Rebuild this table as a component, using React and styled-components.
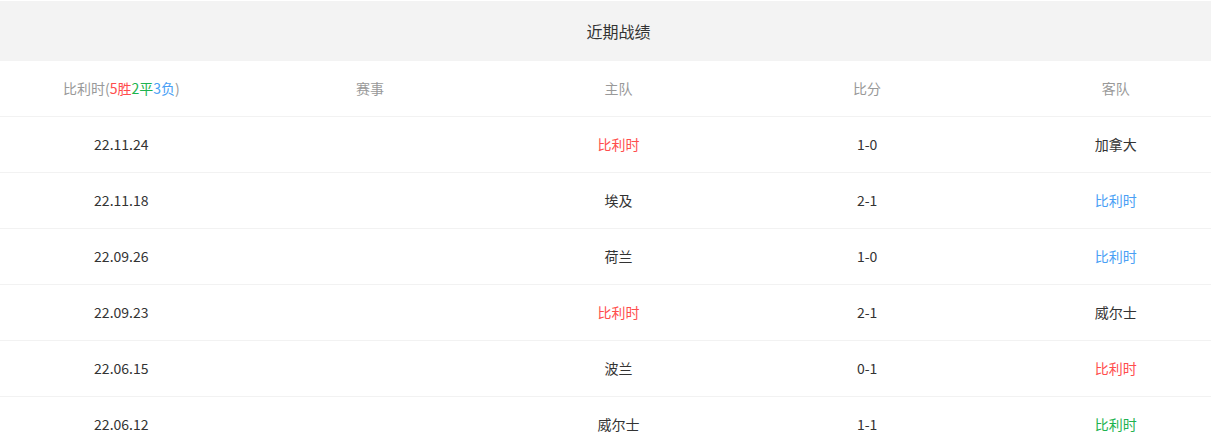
import styled, { createGlobalStyle } from "styled-components";

const GlobalStyle = createGlobalStyle`
  html, body {
    margin: 0;
    padding: 0;
    background: #fff;
    overflow: hidden;
  }
  body {
    font-family: "Noto Sans CJK SC", "Noto Sans", sans-serif;
  }
`;

const Panel = styled.div`
  width: 1243px;
  margin-left: -3px;
  padding-top: 1px;
  background: #fff;
`;

const PanelTitle = styled.div`
  height: 60px;
  padding-bottom: 1px;
  box-sizing: border-box;
  background: #f3f3f3;
  display: flex;
  align-items: center;
  justify-content: center;
  font-size: 16px;
  color: #333;
`;

const Row = styled.div`
  display: grid;
  grid-template-columns: repeat(5, 1fr);
  height: 56px;
  border-bottom: 1px solid #f2f2f2;
  box-sizing: border-box;
`;

const Cell = styled.div`
  display: flex;
  align-items: center;
  justify-content: center;
  padding-bottom: 2px;
  font-size: 14px;
  color: ${(p) => p.$color || "#333"};
`;

const HeadCell = styled(Cell)`
  color: #999;
`;

const Mark = styled.span`
  color: ${(p) => p.$color};
`;

const RED = "#ff4d4d";
const GREEN = "#1db34f";
const BLUE = "#4a9ff5";

const matches = [
  { date: "22.11.24", home: "比利时", homeColor: RED, score: "1-0", away: "加拿大" },
  { date: "22.11.18", home: "埃及", score: "2-1", away: "比利时", awayColor: BLUE },
  { date: "22.09.26", home: "荷兰", score: "1-0", away: "比利时", awayColor: BLUE },
  { date: "22.09.23", home: "比利时", homeColor: RED, score: "2-1", away: "威尔士" },
  { date: "22.06.15", home: "波兰", score: "0-1", away: "比利时", awayColor: RED },
  { date: "22.06.12", home: "威尔士", score: "1-1", away: "比利时", awayColor: GREEN },
];

export default function App() {
  return (
    <>
      <GlobalStyle />
      <Panel>
        <PanelTitle>近期战绩</PanelTitle>
        <Row>
          <HeadCell>
            比利时(<Mark $color={RED}>5胜</Mark>
            <Mark $color={GREEN}>2平</Mark>
            <Mark $color={BLUE}>3负</Mark>)
          </HeadCell>
          <HeadCell>赛事</HeadCell>
          <HeadCell>主队</HeadCell>
          <HeadCell>比分</HeadCell>
          <HeadCell>客队</HeadCell>
        </Row>
        {matches.map((m) => (
          <Row key={m.date}>
            <Cell>{m.date}</Cell>
            <Cell />
            <Cell $color={m.homeColor}>{m.home}</Cell>
            <Cell>{m.score}</Cell>
            <Cell $color={m.awayColor}>{m.away}</Cell>
          </Row>
        ))}
      </Panel>
    </>
  );
}
